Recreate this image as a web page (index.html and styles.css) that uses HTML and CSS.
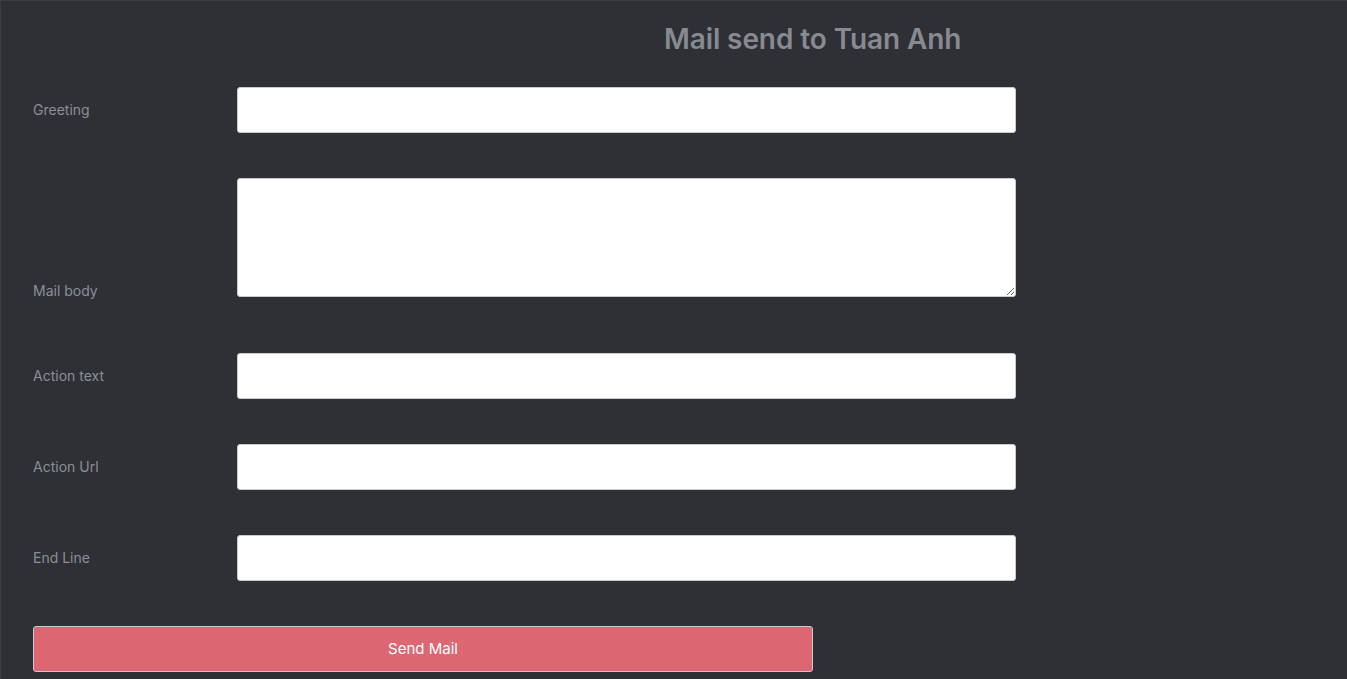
FILE: index.html
```html
<!DOCTYPE html>
<html>
<head>
<meta charset="utf-8">
<link rel="stylesheet" href="styles.css">
</head>
<body>
<div class="page">
  <h1 class="title">Mail send to Tuan Anh</h1>
  <form class="form">
    <div class="row">
      <label class="label">Greeting</label>
      <input class="field" type="text">
    </div>
    <div class="row row-area">
      <label class="label">Mail body</label>
      <textarea class="field area"></textarea>
    </div>
    <div class="row">
      <label class="label">Action text</label>
      <input class="field" type="text">
    </div>
    <div class="row">
      <label class="label">Action Url</label>
      <input class="field" type="text">
    </div>
    <div class="row">
      <label class="label">End Line</label>
      <input class="field" type="text">
    </div>
    <button class="send" type="button">Send Mail</button>
  </form>
</div>
</body>
</html>
```

FILE: styles.css
```css
html, body {
  margin: 0;
  padding: 0;
  height: 100%;
}
body {
  background: #2e3035;
  font-family: Inter, "Liberation Sans", sans-serif;
  overflow: hidden;
}
.page {
  height: 100%;
  box-sizing: border-box;
  border-top: 1px solid #3a3d42;
  border-left: 1px solid #3a3d42;
  padding: 0 0 0 32px;
}
.title {
  margin: 19px 0 0 0;
  padding-left: 631px;
  font-size: 28px;
  font-weight: 600;
  color: #878a90;
  line-height: 38px;
  letter-spacing: -0.1px;
}
.form {
  display: flex;
  flex-direction: column;
  gap: 45px;
  margin-top: 29px;
  width: 983px;
}
.row {
  display: grid;
  grid-template-columns: 204px 779px;
  align-items: center;
}
.row-area {
  align-items: end;
  height: 130px;
}
.row-area .label {
  margin-bottom: 7px;
}
.label {
  font-size: 14px;
  color: #8b8f97;
  line-height: 20px;
}
.field {
  height: 46px;
  box-sizing: border-box;
  background: #fff;
  border: 1px solid #c9cbce;
  border-radius: 3px;
  margin: 0;
  padding: 6px 12px;
}
.area {
  align-self: start;
  height: 119px;
  resize: vertical;
}
.send {
  width: 780px;
  height: 46px;
  background: #dd6673;
  border: 1px solid #c8cacc;
  border-radius: 3px;
  color: #fff;
  font-family: Inter, "Liberation Sans", sans-serif;
  font-size: 15px;
  line-height: 18px;
  padding: 0;
}
```
